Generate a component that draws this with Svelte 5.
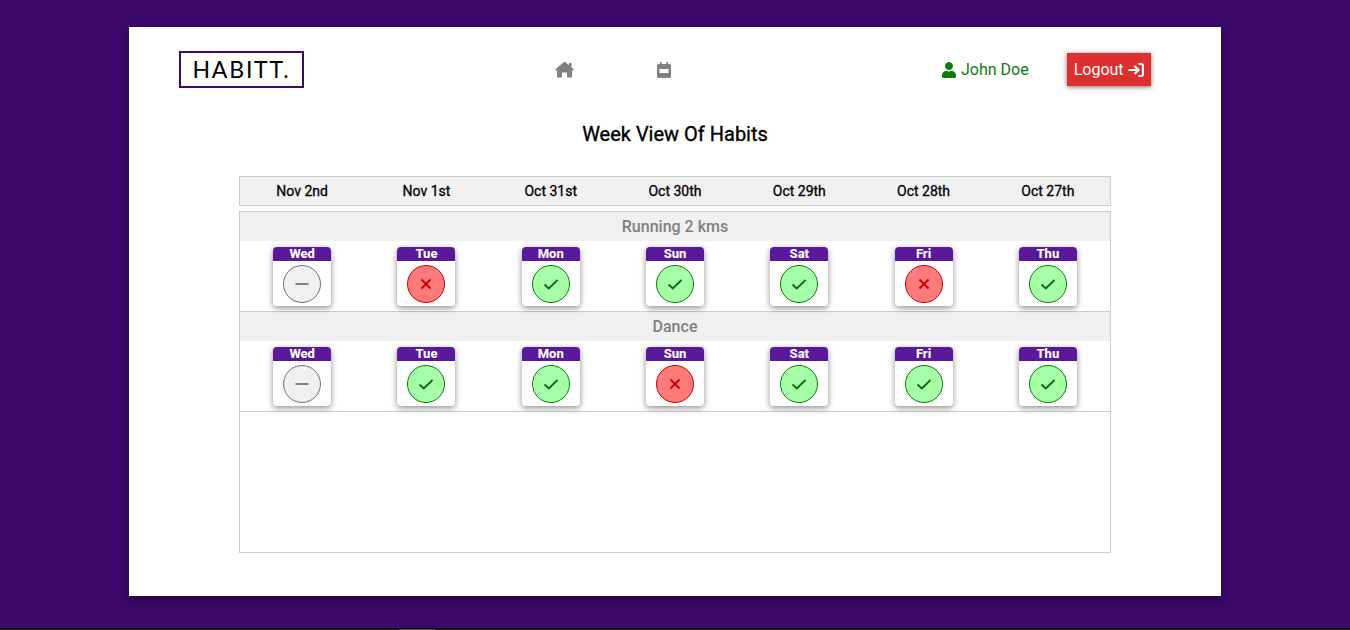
<script>
  const dates = ['Nov 2nd', 'Nov 1st', 'Oct 31st', 'Oct 30th', 'Oct 29th', 'Oct 28th', 'Oct 27th'];
  const days = ['Wed', 'Tue', 'Mon', 'Sun', 'Sat', 'Fri', 'Thu'];
  const habits = [
    { name: 'Running 2 kms', marks: ['none', 'no', 'yes', 'yes', 'yes', 'no', 'yes'] },
    { name: 'Dance', marks: ['none', 'yes', 'yes', 'no', 'yes', 'yes', 'yes'] }
  ];
</script>

<div class="page">
  <main class="sheet">
    <header class="nav">
      <div class="logo">HABITT.</div>
      <div class="links">
        <a href="#home" class="link" aria-label="Home">
          <svg width="19" height="17" viewBox="0 0 19 17"><path fill="currentColor" d="M9.500 0.500L14 4.200V2h2.500v4.300L19 8.400l-1 1.200-1-.8V16.500h-5v-5H7v5H2V8.800l-1 .8-1-1.200z"/></svg>
        </a>
        <a href="#week" class="link" aria-label="Week">
          <svg width="14" height="16" viewBox="0 0 14 16"><path fill="currentColor" fill-rule="evenodd" d="M3 0h1.600v2h4.800V0H11v2h1.500A1.500 1.500 0 0 1 14 3.500v11a1.500 1.500 0 0 1-1.500 1.500h-11A1.500 1.500 0 0 1 0 14.500v-11A1.500 1.500 0 0 1 1.500 2H3zM2.500 7v4h9V7z"/></svg>
        </a>
      </div>
      <div class="user">
        <svg width="14" height="16" viewBox="0 0 448 512"><path fill="currentColor" d="M224 256c70.700 0 128-57.300 128-128S294.700 0 224 0 96 57.300 96 128s57.300 128 128 128zm89.600 32h-16.700c-22.200 10.200-46.900 16-72.900 16s-50.600-5.800-72.900-16h-16.700C60.200 288 0 348.200 0 422.400V464c0 26.500 21.500 48 48 48h352c26.500 0 48-21.500 48-48v-41.600c0-74.200-60.200-134.400-134.400-134.400z"/></svg>
        <span>John Doe</span>
      </div>
      <button class="logout">
        Logout
        <svg width="16" height="16" viewBox="0 0 16 16" fill="none" stroke="currentColor" stroke-width="2.200"><path d="M0.500 8h9M6.500 4l4 4-4 4M10.500 2h2.500a2 2 0 0 1 2 2v8a2 2 0 0 1-2 2h-2.500"/></svg>
      </button>
    </header>

    <h1>Week View Of Habits</h1>

    <div class="dates">
      {#each dates as date}
        <div>{date}</div>
      {/each}
    </div>

    <div class="board">
      {#each habits as habit}
        <div class="habit-name">{habit.name}</div>
        <div class="week">
          {#each habit.marks as mark, i}
            <div class="cell">
              <div class="day-card">
                <div class="day">{days[i]}</div>
                <div class="mark {mark}">
                  <svg width="16" height="16" viewBox="0 0 16 16" fill="none" stroke="currentColor" stroke-width="1.800">
                    {#if mark === 'yes'}
                      <path d="M1.500 8.500l4.300 4 8.700-8.500"/>
                    {:else if mark === 'no'}
                      <path d="M3.500 3.500l9 9M12.500 3.500l-9 9"/>
                    {:else}
                      <path d="M1.500 8h13"/>
                    {/if}
                  </svg>
                </div>
              </div>
            </div>
          {/each}
        </div>
      {/each}
    </div>
  </main>
  <div class="strip"><span></span></div>
</div>

<style>
  :global(body) {
    margin: 0;
    background: #3c096c;
    font-family: Roboto, "Liberation Sans", sans-serif;
  }

  .page {
    display: flex;
    flex-direction: column;
    height: 630px;
    padding-top: 27px;
    box-sizing: border-box;
    overflow: hidden;
  }

  .sheet {
    width: 1092px;
    height: 569px;
    margin: 0 auto;
    padding: 24px 70px 0 50px;
    box-sizing: border-box;
    background: #fff;
    box-shadow: 0 4px 10px rgba(0, 0, 0, 0.5);
  }

  .nav {
    display: flex;
    align-items: center;
    height: 37px;
  }

  .logo {
    flex: none;
    width: 125px;
    height: 37px;
    box-sizing: border-box;
    border: 2px solid #3c096c;
    font-family: Lato, sans-serif;
    font-size: 23px;
    letter-spacing: 1.8px;
    line-height: 33px;
    text-align: center;
    color: #000;
  }

  .links {
    display: flex;
    align-items: center;
    gap: 83px;
    margin-left: 251px;
  }

  .link {
    display: flex;
    color: #808080;
  }

  .user {
    display: flex;
    align-items: center;
    gap: 5px;
    margin-left: 271px;
    color: #0f7a0f;
    font-size: 16px;
    white-space: nowrap;
  }

  .logout {
    display: flex;
    align-items: center;
    gap: 4px;
    height: 33px;
    margin-left: 38px;
    padding: 0 7px;
    border: 0;
    background: #dc2f2f;
    color: #fff;
    font: 16px Roboto, sans-serif;
    box-shadow: 0 1px 5px rgba(0, 0, 0, 0.55);
  }

  h1 {
    margin: 34px -20px 30px 0;
    font-size: 20px;
    font-weight: 400;
    -webkit-text-stroke: 0.35px #000;
    line-height: 24px;
    text-align: center;
    color: #000;
  }

  .dates,
  .week {
    display: grid;
    grid-template-columns: repeat(7, 1fr);
  }

  .dates {
    width: 872px;
    height: 30px;
    margin-left: 60px;
    box-sizing: border-box;
    border: 1px solid #ccc;
    background: #f0f0f0;
    font-size: 14px;
    font-weight: 400;
    -webkit-text-stroke: 0.3px #000;
    line-height: 28px;
    text-align: center;
    color: #000;
  }

  .board {
    width: 872px;
    height: 342px;
    margin: 5px 0 0 60px;
    box-sizing: border-box;
    border: 1px solid #ccc;
  }

  .habit-name {
    height: 29px;
    background: #f0f0f0;
    font-size: 16px;
    font-weight: 500;
    line-height: 29px;
    text-align: center;
    color: #808080;
  }

  .week {
    height: 70px;
    border-bottom: 1px solid #ccc;
  }

  .cell {
    display: flex;
    justify-content: center;
    padding-top: 6px;
  }

  .day-card {
    width: 58px;
    height: 59px;
    border-radius: 4px;
    overflow: hidden;
    background: #fff;
    box-shadow: 0 2px 6px rgba(0, 0, 0, 0.45);
  }

  .day {
    height: 14px;
    background: #5a189a;
    color: #fff;
    font-size: 13px;
    font-weight: 800;
    line-height: 14px;
    text-align: center;
  }

  .mark {
    display: flex;
    align-items: center;
    justify-content: center;
    width: 38px;
    height: 38px;
    margin: 4px auto 0;
    box-sizing: border-box;
    border-radius: 50%;
    border: 1px solid;
  }

  .yes {
    background: #a6ffa6;
    border-color: #008000;
    color: #0a6a0a;
  }

  .no {
    background: #ff7a7a;
    border-color: #c40000;
    color: #c40000;
  }

  .none {
    background: #f0f0f0;
    border-color: #707070;
    color: #808080;
  }

  .strip {
    flex: none;
    height: 1px;
    margin-top: auto;
    border-top: 1px solid #000;
    background: #1c1c1c;
  }

  .strip span {
    display: block;
    width: 36px;
    height: 1px;
    margin-left: 399px;
    background: #555;
  }
</style>
